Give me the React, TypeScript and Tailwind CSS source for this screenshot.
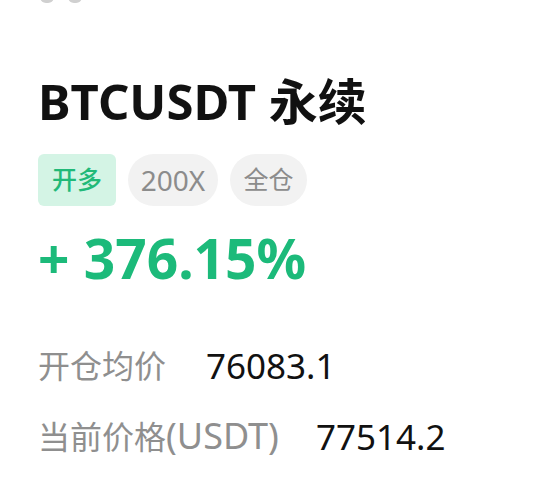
import React from 'react';

const font = { fontFamily: '"Noto Sans", "Noto Sans CJK SC", sans-serif' };

export default function App() {
  const rows = [
    { label: '开仓均价', unit: '', value: '76083.1', gap: 'gap-[40px]' },
    { label: '当前价格', unit: '(USDT)', value: '77514.2', gap: 'gap-[37px]' },
  ];

  return (
    <div className="relative w-[541px] h-[503px] bg-white overflow-hidden" style={font}>
      {/* cut-off marks at the top */}
      <div className="absolute left-[40px] top-[-9px] flex gap-[14px]">
        <div className="w-[14px] h-[12px] rounded-full bg-[#d0d0d0]" />
        <div className="w-[14px] h-[12px] rounded-full bg-[#d0d0d0]" />
      </div>

      <div className="flex flex-col pl-[38px] pt-[69px]">
        <h1 className="text-[49px] leading-[64px] font-bold text-[#111]">BTCUSDT 永续</h1>

        <div className="flex gap-[12px] mt-[21px]">
          <span className="flex items-center justify-center w-[78px] h-[52px] rounded-[6px] bg-[#d4f4e5] text-[#21b978] text-[25px] font-medium">
            开多
          </span>
          <span className="flex items-center justify-center w-[90px] h-[52px] rounded-full bg-[#f2f2f2] text-[#8c8c8c] text-[28px]">
            200X
          </span>
          <span className="flex items-center justify-center w-[77px] h-[52px] rounded-full bg-[#f2f2f2] text-[#8c8c8c] text-[25px]">
            全仓
          </span>
        </div>

        <div className="mt-[20px] text-[55px] leading-[64px] font-bold text-[#1cba7a]">+ 376.15%</div>

        <div className="flex flex-col gap-[30px] mt-[56px]">
          {rows.map(r => (
            <div key={r.label} className={`flex items-center ${r.gap} leading-[40px]`}>
              <span className="text-[#8f8f8f] text-[32px]">
                {r.label}
                {r.unit && <span className="text-[36px]">{r.unit}</span>}
              </span>
              <span className="text-[#111] text-[35px]">{r.value}</span>
            </div>
          ))}
        </div>
      </div>
    </div>
  );
}
